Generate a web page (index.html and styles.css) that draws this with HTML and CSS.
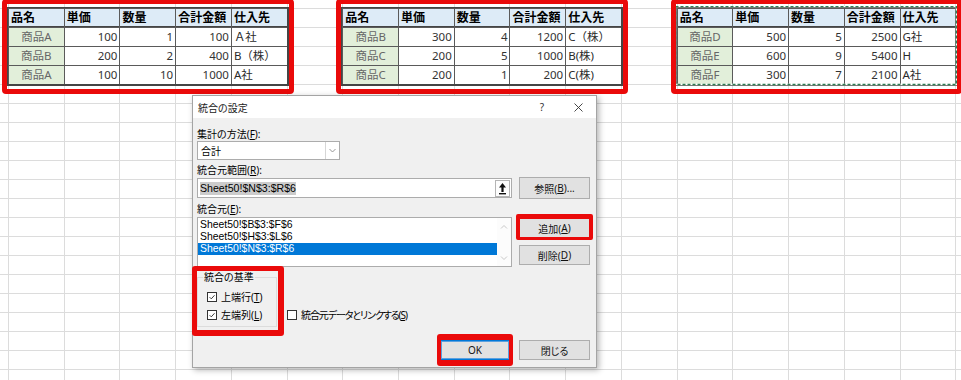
FILE: index.html
```html
<!DOCTYPE html>
<html lang="ja">
<head>
<meta charset="utf-8">
<title>統合の設定</title>
<link rel="stylesheet" href="styles.css">
</head>
<body>
<div class="sheet">
  <div class="tables">
    <div class="hl">
      <div class="tbl">
        <div class="c h">品名</div><div class="c h">単価</div><div class="c h">数量</div><div class="c h">合計金額</div><div class="c h">仕入先</div>
        <div class="c n">商品A</div><div class="c r">100</div><div class="c r">1</div><div class="c r">100</div><div class="c">Ａ社</div>
        <div class="c n">商品B</div><div class="c r">200</div><div class="c r">2</div><div class="c r">400</div><div class="c">B（株）</div>
        <div class="c n">商品A</div><div class="c r">100</div><div class="c r">10</div><div class="c r">1000</div><div class="c">A社</div>
      </div>
    </div>
    <div class="hl">
      <div class="tbl">
        <div class="c h">品名</div><div class="c h">単価</div><div class="c h">数量</div><div class="c h">合計金額</div><div class="c h">仕入先</div>
        <div class="c n">商品B</div><div class="c r">300</div><div class="c r">4</div><div class="c r">1200</div><div class="c">C（株）</div>
        <div class="c n">商品C</div><div class="c r">200</div><div class="c r">5</div><div class="c r">1000</div><div class="c">B(株)</div>
        <div class="c n">商品C</div><div class="c r">200</div><div class="c r">1</div><div class="c r">200</div><div class="c">C(株)</div>
      </div>
    </div>
    <div class="hl ants">
      <div class="tbl">
        <div class="c h">品名</div><div class="c h">単価</div><div class="c h">数量</div><div class="c h">合計金額</div><div class="c h">仕入先</div>
        <div class="c n">商品D</div><div class="c r">500</div><div class="c r">5</div><div class="c r">2500</div><div class="c">G社</div>
        <div class="c n">商品E</div><div class="c r">600</div><div class="c r">9</div><div class="c r">5400</div><div class="c">H</div>
        <div class="c n">商品F</div><div class="c r">300</div><div class="c r">7</div><div class="c r">2100</div><div class="c">A社</div>
      </div>
      <svg class="antline" width="283" height="80" viewBox="0 0 283 80">
        <rect x="0.5" y="0.5" width="281" height="78" fill="none" stroke="#ffffff" stroke-width="1.6"/>
        <rect x="0.5" y="0.5" width="281" height="78" fill="none" stroke="#2f7d55" stroke-width="1.6" stroke-dasharray="3 2"/>
      </svg>
    </div>
  </div>

  <div class="dialog">
    <div class="titlebar">
      <span class="title">統合の設定</span>
      <span class="tb-btn help">?</span>
      <span class="tb-btn close">
        <svg width="9" height="9" viewBox="0 0 9 9"><path d="M0.5 0.5 L8.5 8.5 M8.5 0.5 L0.5 8.5" stroke="#333" stroke-width="0.9" fill="none"/></svg>
      </span>
    </div>
    <div class="dbody">
      <div class="lbl l1">集計の方法(<u>F</u>):</div>
      <div class="combo">
        <span class="combo-text">合計</span>
        <span class="dd"><svg width="13" height="17" viewBox="0 0 13 17"><path d="M3.5 7 L6.5 10 L9.5 7" stroke="#8a8a8a" stroke-width="0.9" fill="none"/></svg></span>
      </div>
      <div class="lbl l2">統合元範囲(<u>R</u>):</div>
      <div class="row rowd">
        <div class="input">
          <span class="sel">Sheet50!$N$3:$R$6</span>
          <span class="rbtn"><svg width="13" height="15" viewBox="0 0 13 15"><path d="M6.5 2 L10 6.5 L7.6 6.5 L7.6 11 L5.4 11 L5.4 6.5 L3 6.5 Z" fill="#111"/><rect x="3" y="12" width="7" height="1.4" fill="#111"/></svg></span>
        </div>
        <div class="btn">参照(<u>B</u>)...</div>
      </div>
      <div class="lbl l3">統合元(<u>E</u>):</div>
      <div class="row rowf">
        <div class="list">
          <div class="items">
            <div class="item">Sheet50!$B$3:$F$6</div>
            <div class="item">Sheet50!$H$3:$L$6</div>
            <div class="item selected">Sheet50!$N$3:$R$6</div>
          </div>
          <div class="vscroll">
            <svg width="14" height="10" viewBox="0 0 14 10"><path d="M4 6.5 L7 3.5 L10 6.5" stroke="#c2c2c2" stroke-width="0.9" fill="none"/></svg>
            <svg width="14" height="10" viewBox="0 0 14 10"><path d="M4 3.5 L7 6.5 L10 3.5" stroke="#c2c2c2" stroke-width="0.9" fill="none"/></svg>
          </div>
        </div>
        <div class="btncol">
          <div class="btn mark-add">追加(<u>A</u>)</div>
          <div class="btn del">削除(<u>D</u>)</div>
        </div>
      </div>
      <div class="row rowg">
        <div class="group">
          <div class="legend">統合の基準</div>
          <div class="chk c1"><span class="box"><svg width="10" height="10" viewBox="0 0 10 10"><path d="M2 5.2 L4.1 7.3 L8.2 2.8" stroke="#222" stroke-width="1.1" fill="none"/></svg></span>上端行(<u>T</u>)</div>
          <div class="chk c2"><span class="box"><svg width="10" height="10" viewBox="0 0 10 10"><path d="M2 5.2 L4.1 7.3 L8.2 2.8" stroke="#222" stroke-width="1.1" fill="none"/></svg></span>左端列(<u>L</u>)</div>
        </div>
        <div class="chk link"><span class="box"></span><span class="link-text">統合元データとリンクする(<u>S</u>)</span></div>
      </div>
      <div class="row foot">
        <div class="btn ok">OK</div>
        <div class="btn">閉じる</div>
      </div>
    </div>
  </div>
</div>
</body>
</html>
```

FILE: styles.css
```css
html, body {
  margin: 0;
  padding: 0;
}
body {
  width: 961px;
  height: 380px;
  overflow: hidden;
  background: #ffffff;
  font-family: "Noto Sans", "Noto Sans CJK JP", sans-serif;
}

.sheet {
  position: relative;
  width: 961px;
  height: 380px;
  background-image:
    repeating-linear-gradient(to right, #dcdcdc 0 1px, transparent 1px 55.72px),
    repeating-linear-gradient(to bottom, #dcdcdc 0 1px, transparent 1px 19px);
  background-position: 8px 0, 0 8px;
  background-size: 953px 380px, 961px 372px;
  background-repeat: no-repeat;
}

/* ---------- spreadsheet tables ---------- */
.tables {
  display: flex;
  gap: 54.72px;
  padding: 8px 0 0 8px;
}
.hl {
  position: relative;
}
.hl::after {
  content: "";
  position: absolute;
  left: -6px;
  right: -6px;
  top: -9px;
  bottom: -9px;
  border: 5px solid #ea0a0a;
  border-radius: 4px;
  pointer-events: none;
}
.tbl {
  display: grid;
  grid-template-columns: repeat(5, 55.72px);
  grid-auto-rows: 19px;
  border-right: 1px solid #454545;
  border-bottom: 1px solid #454545;
  box-shadow: 0 0 0 1px #454545;
  background: #fff;
}
.c {
  box-sizing: border-box;
  border-left: 1px solid #5a5a5a;
  border-top: 1px solid #5a5a5a;
  font-size: 11.5px;
  line-height: 17px;
  padding: 0 2px;
  white-space: nowrap;
  overflow: hidden;
  color: #2a2a2a;
}
.c.h {
  background: #ddebf7;
  font-weight: bold;
  font-size: 12px;
  color: #000;
  box-shadow: inset 0 -1px 0 #454545;
}
.c.n {
  background: #e2efda;
  text-align: center;
  color: #666;
}
.c.r {
  text-align: right;
  color: #333;
}
.antline {
  position: absolute;
  left: -2px;
  top: -2px;
}

/* ---------- dialog ---------- */
.dialog {
  position: absolute;
  left: 192px;
  top: 95px;
  width: 405px;
  height: 273px;
  box-sizing: border-box;
  border: 1px solid #a4a4a4;
  background: #f0f0f0;
  box-shadow: 2px 2px 6px rgba(0, 0, 0, 0.3);
  display: flex;
  flex-direction: column;
  font-size: 10px;
  color: #000;
  font-feature-settings: "palt";
}
.titlebar {
  height: 22px;
  background: #fff;
  display: flex;
  align-items: center;
  padding-left: 5px;
}
.title {
  flex: 1;
  font-size: 10px;
  color: #222;
}
.tb-btn {
  width: 36px;
  height: 22px;
  display: flex;
  align-items: center;
  justify-content: center;
}
.help {
  font-size: 10px;
  color: #333;
}
.dbody {
  flex: 1;
  padding: 0 6px 7px 4px;
  display: flex;
  flex-direction: column;
}
u {
  text-decoration-thickness: 1px;
  text-underline-offset: 1px;
}
.lbl {
  height: 14px;
  line-height: 14px;
}
.l1 { margin-top: 9px; }
.l2 { margin-top: 3px; }
.l3 { margin-top: 3px; }

.combo {
  width: 143px;
  height: 19px;
  box-sizing: border-box;
  border: 1px solid #acacac;
  background: #fff;
  display: flex;
  align-items: center;
}
.combo-text {
  flex: 1;
  padding-left: 3px;
}
.dd {
  width: 13px;
  height: 17px;
  border-left: 1px solid #d6d6d6;
}

.row {
  display: flex;
}
.rowd {
  height: 22px;
  align-items: center;
  gap: 7px;
}
.input {
  width: 315px;
  height: 20px;
  box-sizing: border-box;
  border: 1px solid #acacac;
  background: #fff;
  display: flex;
  align-items: center;
  justify-content: space-between;
  padding-left: 2px;
  font-family: "Liberation Sans", "Noto Sans CJK JP", sans-serif;
  font-size: 10.6px;
}
.sel {
  background: #cccccc;
  line-height: 13px;
}
.rbtn {
  width: 15px;
  height: 17px;
  box-sizing: border-box;
  border: 1px solid #b5b5b5;
  background: #fdfdfd;
  display: flex;
  align-items: center;
  justify-content: center;
  margin-right: 1px;
}

.btn {
  position: relative;
  width: 71px;
  height: 20px;
  box-sizing: border-box;
  border: 1px solid #adadad;
  background: #e1e1e1;
  display: flex;
  align-items: center;
  justify-content: center;
  color: #111;
}
.rowd .btn {
  height: 22px;
}

.rowf {
  margin-top: 1px;
  gap: 7px;
}
.list {
  width: 315px;
  height: 50px;
  box-sizing: border-box;
  border: 1px solid #acacac;
  background: #fff;
  display: flex;
}
.items {
  flex: 1;
  padding-top: 1px;
  font-family: "Liberation Sans", "Noto Sans CJK JP", sans-serif;
  font-size: 10.4px;
}
.item {
  height: 12px;
  line-height: 12px;
  padding-left: 2px;
}
.item.selected {
  background: #0078d7;
  color: #fff;
}
.vscroll {
  width: 14px;
  background: #fcfcfc;
  display: flex;
  flex-direction: column;
  justify-content: space-between;
  padding: 4px 0 3px;
}
.btncol {
  display: flex;
  flex-direction: column;
}
.mark-add {
  margin-top: 1px;
}
.mark-add::after {
  content: "";
  position: absolute;
  left: -4px;
  right: -4px;
  top: -5px;
  bottom: -3px;
  border-style: solid;
  border-color: #ea0a0a;
  border-width: 5px 4px 3px 4px;
  border-radius: 2px;
}
.del {
  margin-top: 7px;
}

.rowg {
  margin-top: 10px;
  align-items: flex-end;
}
.group {
  position: relative;
  width: 80px;
  box-sizing: border-box;
  border: 1px solid #dcdcdc;
  padding: 0 0 4px 9px;
}
.group::after {
  content: "";
  position: absolute;
  left: -6px;
  right: -8px;
  top: -12px;
  bottom: -10px;
  border-style: solid;
  border-color: #ea0a0a;
  border-width: 5px 6px 6px 5px;
  border-radius: 3px;
}
.legend {
  height: 14px;
  line-height: 14px;
  margin: -8px 0 0 -4px;
  padding: 0 1px;
  width: fit-content;
  background: #f0f0f0;
}
.chk {
  height: 14px;
  line-height: 14px;
  display: flex;
  align-items: center;
  white-space: nowrap;
}
.c1 { margin-top: 6px; }
.c2 { margin-top: 4px; }
.box {
  width: 10px;
  height: 10px;
  box-sizing: border-box;
  border: 1px solid #333;
  background: #fff;
  margin-right: 4px;
  display: flex;
  align-items: center;
  justify-content: center;
  flex: none;
}
.box svg {
  display: block;
}
.link {
  margin: 0 0 5px 10px;
}
.link-text {
  letter-spacing: -1.1px;
}

.foot {
  margin-top: 13px;
  justify-content: flex-end;
  gap: 9px;
}
.ok {
  width: 70px;
  border-color: #0078d7;
  box-shadow: inset 0 0 0 1px #5aa0e0;
}
.ok::after {
  content: "";
  position: absolute;
  left: -4px;
  right: -4px;
  top: -7px;
  bottom: -7px;
  border-style: solid;
  border-color: #ea0a0a;
  border-width: 6px 4px 6px 4px;
  border-radius: 3px;
}
```
